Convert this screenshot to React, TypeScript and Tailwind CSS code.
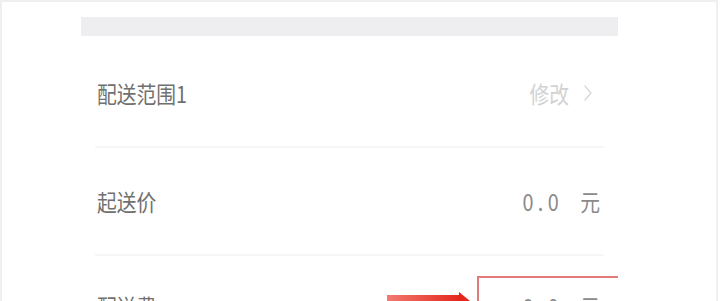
import { ChevronRight } from 'lucide-react';

const font = { fontFamily: '"Noto Sans CJK SC", "Noto Sans", sans-serif' };

function Row({ label, right, h }: { label: string; right: React.ReactNode; h: string }) {
  return (
    <div className={`flex items-center justify-between pl-4 pr-[18px] ${h}`}>
      <span className="origin-left scale-x-[0.86] text-[23px] text-[#707070]">{label}</span>
      {right}
    </div>
  );
}

function Price() {
  return (
    <span className="flex origin-right scale-x-[0.86] items-center text-[23px] text-[#8a8a8a]">
      <span className="tracking-[5px]">0.0</span>
      <span className="ml-[20px]">元</span>
    </span>
  );
}

export default function App() {
  return (
    <div className="relative h-[301px] w-[720px] overflow-hidden bg-white" style={font}>
      <div className="h-full w-[718px] border-l-2 border-r-2 border-t-2 border-[#efefef]">
        <div className="ml-[79px] w-[537px] pt-[15px]">
          {/* grey band */}
          <div className="h-[19px] bg-[#eeeef1]" />

          <Row
            h="h-[110px] pt-[4px]"
            label="配送范围1"
            right={
              <span className="flex origin-right scale-x-[0.86] items-center text-[23px] text-[#d2d2d2]">
                修改
                <ChevronRight className="ml-2 h-7 w-7" strokeWidth={1.1} />
              </span>
            }
          />
          <div className="mx-[14px] h-[2px] bg-[#f6f6f6]" />

          <Row h="h-[106px]" label="起送价" right={<Price />} />
          <div className="mx-[14px] h-[2px] bg-[#f6f6f6]" />

          <Row h="h-[100px]" label="配送费" right={<Price />} />
        </div>
      </div>

      {/* annotation: arrow */}
      <svg className="absolute left-[385px] top-[288px]" width="100" height="30" viewBox="0 0 100 30">
        <defs>
          <linearGradient id="shaft" x1="0" x2="1" y1="0" y2="0">
            <stop offset="0" stopColor="#f27a70" />
            <stop offset="1" stopColor="#e5261c" />
          </linearGradient>
        </defs>
        <rect x="2" y="7" width="74" height="20" fill="url(#shaft)" />
        <polygon points="74,4 74,40 96,22" fill="#e5261c" />
      </svg>

      {/* annotation: highlight box */}
      <div className="absolute left-[477px] top-[276px] h-[60px] w-[141px] border-l-2 border-t-2 border-[#e27a7a]" />
    </div>
  );
}
